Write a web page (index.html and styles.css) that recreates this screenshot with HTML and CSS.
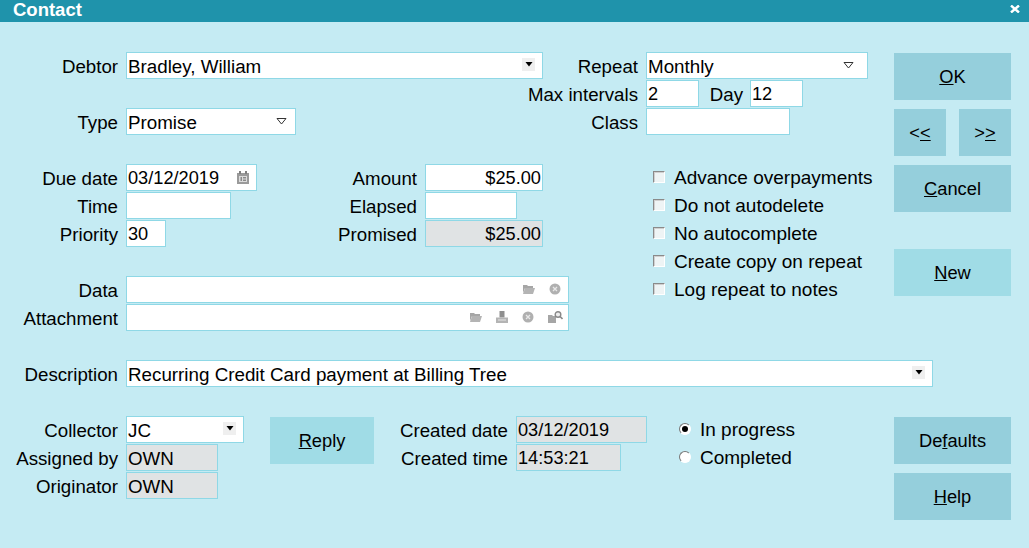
FILE: index.html
```html
<!DOCTYPE html>
<html lang="en">
<head>
    <meta charset="UTF-8">
    <title>Contact</title>
    <link rel="stylesheet" href="styles.css">
</head>
<body>

<div class="titlebar">
    <span class="title">Contact</span>
    <svg class="close" width="10" height="8" viewBox="0 0 10 8"><path d="M1 .5l8 7M9 .5l-8 7" stroke="#fff" stroke-width="2.400"/></svg>
</div>

<form class="form">
    <!-- row 0 -->
    <div class="label r0 c-a">Debtor</div>
    <div class="field combo w-debtor r0 c-b">Bradley, William
        <span class="drop"><svg width="8" height="5" viewBox="0 0 8 5"><path d="M0.500 0h7l-3.500 4.500z" fill="#000"/></svg></span>
    </div>
    <div class="label r0 c-e">Repeat</div>
    <div class="field combo w-repeat r0 c-f">Monthly
        <svg class="open-arrow arrow-far" width="11" height="7" viewBox="0 0 11 7"><path d="M1 .5h9L5.500 6z" fill="#fff" stroke="#333"/></svg>
    </div>
    <button type="button" class="btn r0 c-g span2"><u>O</u>K</button>

    <!-- row 1 -->
    <div class="label r1 c-e">Max intervals</div>
    <div class="inline r1 c-f">
        <div class="field w-short">2</div>
        <div class="day-label">Day</div>
        <div class="field w-short">12</div>
    </div>

    <!-- row 2 -->
    <div class="label r2 c-a">Type</div>
    <div class="field combo w-type r2 c-b">Promise
        <svg class="open-arrow" width="11" height="7" viewBox="0 0 11 7"><path d="M1 .5h9L5.500 6z" fill="#fff" stroke="#333"/></svg>
    </div>
    <div class="label r2 c-e">Class</div>
    <div class="field w-class r2 c-f"></div>
    <div class="nav r2 c-g span2">
        <button type="button" class="btn btn-small">&lt;<u>&lt;</u></button>
        <button type="button" class="btn btn-small">&gt;<u>&gt;</u></button>
    </div>

    <!-- row 4 -->
    <div class="label r4 c-a">Due date</div>
    <div class="field combo num w-date r4 c-b">03/12/2019
        <svg class="cal" width="12" height="13" viewBox="0 0 12 13">
            <path d="M0 2h12v11H0z" fill="#9a9a9a"/>
            <path d="M2 0h2v3H2zM8 0h2v3H8z" fill="#808080"/>
            <path d="M2 5h8v6H2z" fill="#dcdcdc"/>
            <path d="M3.500 6h1.500v4H3.500zM6 6h3v1.500H6zM6 8.500h3V10H6z" fill="#8a8a8a"/>
        </svg>
    </div>
    <div class="label r4 c-c">Amount</div>
    <div class="field money num w-amount r4 c-d">$25.00</div>
    <div class="check r4 c-f"><span class="box"></span>Advance overpayments</div>
    <button type="button" class="btn r4 c-g span2"><u>C</u>ancel</button>

    <!-- row 5 -->
    <div class="label r5 c-a">Time</div>
    <div class="field w-time r5 c-b"></div>
    <div class="label r5 c-c">Elapsed</div>
    <div class="field w-elapsed r5 c-d"></div>
    <div class="check r5 c-f"><span class="box"></span>Do not autodelete</div>

    <!-- row 6 -->
    <div class="label r6 c-a">Priority</div>
    <div class="field num w-priority r6 c-b">30</div>
    <div class="label r6 c-c">Promised</div>
    <div class="field money num readonly w-amount r6 c-d">$25.00</div>
    <div class="check r6 c-f"><span class="box"></span>No autocomplete</div>

    <!-- row 7 -->
    <div class="check r7 c-f"><span class="box"></span>Create copy on repeat</div>
    <button type="button" class="btn btn-light r7 c-g span2"><u>N</u>ew</button>

    <!-- row 8 -->
    <div class="label r8 c-a">Data</div>
    <div class="field combo w-data r8 c-b">
        <span class="tools">
            <svg width="13" height="10" viewBox="0 0 13 10"><path d="M1 1h4l1 1h5v2H3L1 9z" fill="#a6a6a6"/><path d="M3 4h10l-2 6H1z" fill="#b4b4b4"/></svg>
            <svg width="12" height="12" viewBox="0 0 12 12"><circle cx="6" cy="6" r="5.500" fill="#b0b0b0"/><path d="M4 4l4 4M8 4l-4 4" stroke="#e8e8e8" stroke-width="1.300"/></svg>
        </span>
    </div>
    <div class="check r8 c-f"><span class="box"></span>Log repeat to notes</div>

    <!-- row 9 -->
    <div class="label r9 c-a">Attachment</div>
    <div class="field combo w-data r9 c-b">
        <span class="tools tools-wide">
            <svg width="13" height="10" viewBox="0 0 13 10"><path d="M1 1h4l1 1h5v2H3L1 9z" fill="#a6a6a6"/><path d="M3 4h10l-2 6H1z" fill="#b4b4b4"/></svg>
            <svg width="12" height="12" viewBox="0 0 12 12"><path d="M3.500 0h5v6.500h-5z" fill="#8f8f8f"/><path d="M0 6.500h12V12H0z" fill="#b4b4b4"/><path d="M2 8.500h8v1H2z" fill="#e6e6e6"/></svg>
            <svg width="12" height="12" viewBox="0 0 12 12"><circle cx="6" cy="6" r="5.500" fill="#b0b0b0"/><path d="M4 4l4 4M8 4l-4 4" stroke="#e8e8e8" stroke-width="1.300"/></svg>
            <svg width="15" height="12" viewBox="0 0 15 12"><path d="M0 4h4l1 1h3v7H0z" fill="#a6a6a6"/><circle cx="10" cy="3.500" r="2.800" fill="#eee" stroke="#888" stroke-width="1.400"/><path d="M12 5.500l2.500 2.500" stroke="#888" stroke-width="1.600"/></svg>
        </span>
    </div>

    <!-- row 11 -->
    <div class="label r11 c-a">Description</div>
    <div class="field combo w-desc r11 c-b">Recurring Credit Card payment at Billing Tree
        <span class="drop"><svg width="8" height="5" viewBox="0 0 8 5"><path d="M0.500 0h7l-3.500 4.500z" fill="#000"/></svg></span>
    </div>

    <!-- row 13 -->
    <div class="label r13 c-a">Collector</div>
    <div class="field combo w-collector r13 c-b">JC
        <span class="drop"><svg width="8" height="5" viewBox="0 0 8 5"><path d="M0.500 0h7l-3.500 4.500z" fill="#000"/></svg></span>
    </div>
    <button type="button" class="btn btn-light btn-reply r13 c-reply span2"><u>R</u>eply</button>
    <div class="label r13 c-created">Created date</div>
    <div class="field num readonly w-created r13 c-e">03/12/2019</div>
    <div class="radio r13 c-f"><span class="dot on"></span>In progress</div>
    <button type="button" class="btn r13 c-g span2">De<u>f</u>aults</button>

    <!-- row 14 -->
    <div class="label r14 c-a">Assigned by</div>
    <div class="field readonly w-own r14 c-b">OWN</div>
    <div class="label r14 c-created">Created time</div>
    <div class="field num readonly w-ctime r14 c-e">14:53:21</div>
    <div class="radio r14 c-f"><span class="dot"></span>Completed</div>

    <!-- row 15 -->
    <div class="label r15 c-a">Originator</div>
    <div class="field readonly w-own r15 c-b">OWN</div>
    <button type="button" class="btn r15 c-g span2"><u>H</u>elp</button>
</form>

</body>
</html>
```

FILE: styles.css
```css
html, body {
    margin: 0;
    height: 100%;
    overflow: hidden;
}

body {
    font-family: "Liberation Sans", Arial, sans-serif;
    font-size: 19px;
    color: #000;
    background: #c5ebf3;
}

.titlebar {
    height: 22px;
    background: #1f93ab;
    color: #fff;
    display: flex;
    justify-content: space-between;
    align-items: center;
    padding: 0 9px 0 13px;
}

.title {
    font-weight: bold;
    font-size: 18.500px;
    line-height: 20px;
    margin-top: -3px;
}

.close {
    margin-top: -4px;
}

/* 28px row pitch, tracks follow the field edges of the dialog */
.form {
    display: grid;
    grid-template-columns: 126px 144px 104px 51px 91px 130px 248px 117px;
    grid-auto-rows: 26px;
    row-gap: 2px;
    padding-top: 31px;
}

.r0 { grid-row-start: 1; }
.r1 { grid-row-start: 2; }
.r2 { grid-row-start: 3; }
.r4 { grid-row-start: 5; }
.r5 { grid-row-start: 6; }
.r6 { grid-row-start: 7; }
.r7 { grid-row-start: 8; }
.r8 { grid-row-start: 9; }
.r9 { grid-row-start: 10; }
.r11 { grid-row-start: 12; }
.r13 { grid-row-start: 14; }
.r14 { grid-row-start: 15; }
.r15 { grid-row-start: 16; }

.span2 { grid-row-end: span 2; }

.c-a { grid-column: 1; }
.c-b { grid-column: 2 / span 5; }
.c-c { grid-column: 2 / span 3; }
.c-d { grid-column: 5 / span 3; }
.c-e { grid-column: 6 / span 2; }
.c-f { grid-column: 7; }
.c-g { grid-column: 8; }
.c-reply { grid-column: 3; }
.c-created { grid-column: 4 / span 2; }

.r0.c-e, .r1.c-e, .r2.c-e { grid-column: 5 / span 2; }

.label {
    padding-right: 8px;
    text-align: right;
    font-size: 18.700px;
    line-height: 28px;
    white-space: nowrap;
}

/* fields are one pixel taller than their row and stick out at the top */
.field {
    box-sizing: border-box;
    height: 27px;
    margin-top: -1px;
    background: #fff;
    border: 1px solid #8fd8e6;
    padding: 0 1px;
    line-height: 27px;
    font-size: 18.800px;
    white-space: nowrap;
    justify-self: start;
}

.num {
    font-size: 18.200px;
}

.combo {
    position: relative;
}

.readonly {
    background: #e0e3e4;
}

.money {
    text-align: right;
}

.w-debtor { width: 417px; }
.w-repeat { width: 222px; }
.w-short { width: 53px; font-size: 18.200px; }
.w-class { width: 144px; }
.w-type { width: 170px; }
.w-date { width: 131px; }
.w-time { width: 105px; }
.w-priority { width: 40px; }
.w-amount { width: 118px; }
.w-elapsed { width: 92px; }
.w-data { width: 443px; }
.w-desc { width: 807px; }
.w-collector { width: 118px; }
.w-own { width: 92px; }
.w-created { width: 131px; }
.w-ctime { width: 105px; }

.inline {
    display: flex;
}

.day-label {
    width: 51px;
    padding-right: 7px;
    box-sizing: border-box;
    text-align: right;
    font-size: 18.700px;
    line-height: 28px;
}

/* icons sitting inside a field */
.drop {
    position: absolute;
    top: 5px;
    right: 7px;
    width: 13px;
    height: 13px;
    background: #efefef;
    display: flex;
    align-items: center;
    justify-content: center;
}

.open-arrow {
    position: absolute;
    top: 9px;
    right: 8px;
}

.arrow-far {
    right: 13px;
}

.cal {
    position: absolute;
    top: 6px;
    right: 7px;
}

.tools {
    position: absolute;
    top: 6px;
    right: 7px;
    display: flex;
    align-items: center;
    gap: 14px;
}

.tools-wide {
    right: 5px;
}

.check, .radio {
    display: flex;
    align-items: center;
    white-space: nowrap;
    height: 26px;
}

.check {
    padding-left: 7px;
}

.radio {
    padding-left: 33px;
}

.box {
    box-sizing: border-box;
    width: 12px;
    height: 12px;
    margin: -2px 9px 0 0;
    background: #eef4f5;
    border: 1px solid;
    border-color: #8a8a8a #fff #fff #8a8a8a;
    box-shadow: inset 1px 1px 0 #d0d0d0;
}

.dot {
    box-sizing: border-box;
    position: relative;
    width: 12px;
    height: 12px;
    margin: -2px 9px 0 0;
    border-radius: 50%;
    background: #fff;
    border: 1px solid;
    border-color: #777 #fff #fff #777;
}

.dot.on::after {
    content: "";
    position: absolute;
    top: 2px;
    left: 2px;
    width: 6px;
    height: 6px;
    border-radius: 50%;
    background: #000;
}

.btn {
    height: 47px;
    padding: 1px 0 0;
    border: none;
    background: #95cfdc;
    color: #000;
    font-family: inherit;
    font-size: 18.300px;
    align-self: start;
}

.btn-light {
    background: #a0dce6;
}

.btn-reply {
    width: 104px;
}

.btn-small {
    width: 52px;
}

.nav {
    display: flex;
    justify-content: space-between;
}
```
